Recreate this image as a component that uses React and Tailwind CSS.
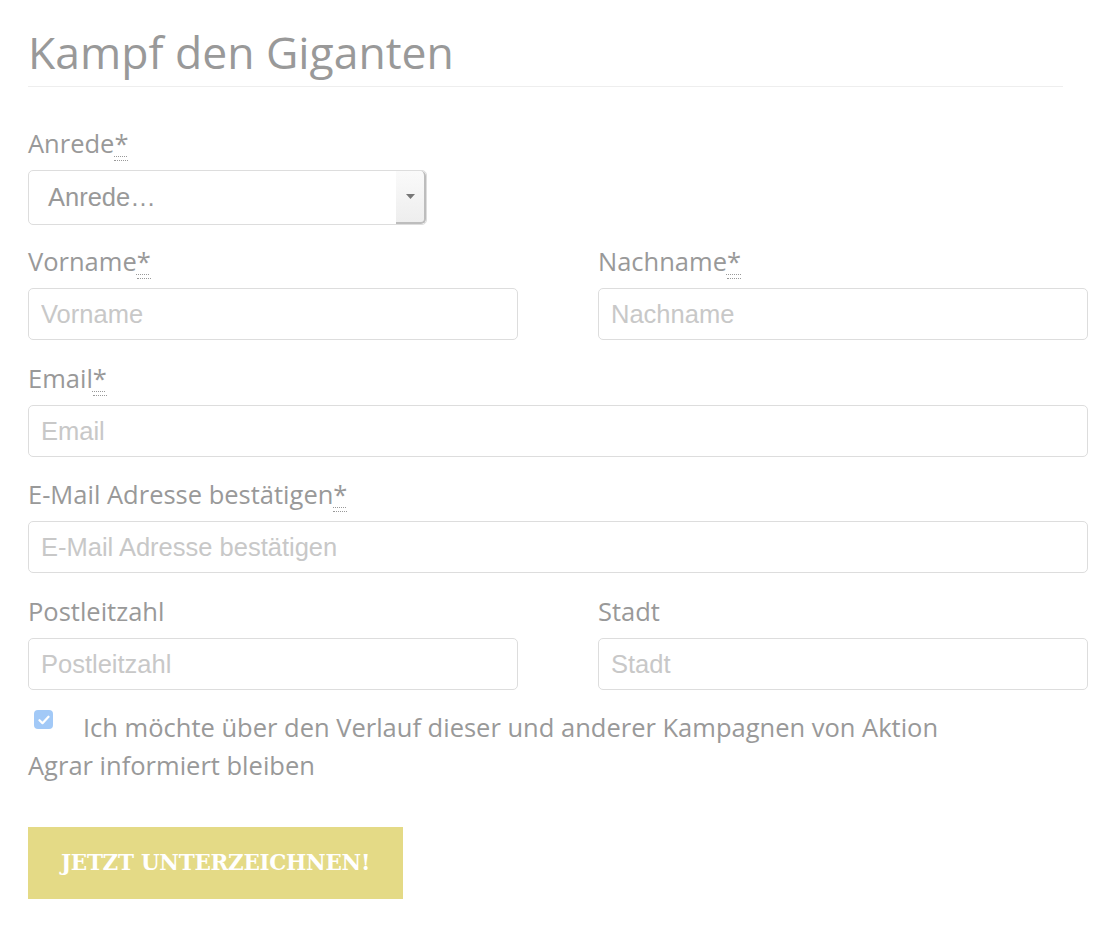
import React from "react";

const labelCls = "block text-[25.5px] leading-[30px] text-[#999] mb-[12px] [font-family:'Open_Sans',sans-serif]";
const inputCls = "block w-full h-[52px] rounded-[5px] border border-[#ddd] bg-white px-[12px] text-[25.5px] text-[#555] placeholder:text-[#c8c8c8] outline-none [font-family:'Liberation_Sans',Arial,sans-serif]";

function Req() {
  return (
    <span className="border-b border-dotted border-[#999] underline decoration-dotted decoration-1 underline-offset-[3px]">*</span>
  );
}

function Field({ label, req, placeholder }) {
  return (
    <div>
      <label className={labelCls}>
        {label}
        {req && <Req />}
      </label>
      <input className={inputCls} placeholder={placeholder} />
    </div>
  );
}

export default function App() {
  return (
    <div className="bg-white min-h-[936px] w-[1118px] pl-[28px] pt-[24px] [font-family:'Open_Sans',sans-serif]">
      <div className="w-[1060px]">
        <h1 className="text-[44.5px] leading-[56px] text-[#999] font-normal pb-[6px] border-b border-[#eee] w-[1035px] [font-family:'Open_Sans',sans-serif]">
          Kampf den Giganten
        </h1>

        <div className="mt-[41px]">
          <label className={labelCls}>
            Anrede<Req />
          </label>
          <div className="relative w-[399px] h-[55px] rounded-[5px] border border-[#ddd] bg-white flex items-center">
            <span className="pl-[19px] text-[25.5px] text-[#999] [font-family:'Liberation_Sans',Arial,sans-serif]">Anrede…</span>
            <div className="absolute right-0 top-0 bottom-0 w-[30px] rounded-r-[5px] bg-gradient-to-b from-[#fafafa] to-[#eeeeee] border-r-2 border-b-2 border-[#bdbdbd] flex items-center justify-center">
              <svg width="9" height="5" viewBox="0 0 9 5"><path d="M0 0h9L4.5 5z" fill="#777" /></svg>
            </div>
          </div>
        </div>

        <div className="mt-[21px] grid grid-cols-2 gap-x-[80px]">
          <Field label="Vorname" req placeholder="Vorname" />
          <Field label="Nachname" req placeholder="Nachname" />
        </div>

        <div className="mt-[23px]">
          <Field label="Email" req placeholder="Email" />
        </div>

        <div className="mt-[22px]">
          <Field label="E-Mail Adresse bestätigen" req placeholder="E-Mail Adresse bestätigen" />
        </div>

        <div className="mt-[23px] grid grid-cols-2 gap-x-[80px]">
          <Field label="Postleitzahl" placeholder="Postleitzahl" />
          <Field label="Stadt" placeholder="Stadt" />
        </div>

        <div className="mt-[18px] w-[960px] text-[25.5px] leading-[38px] text-[#999]">
          <span className="inline-flex align-top mt-[2px] ml-[6px] mr-[30px] w-[19px] h-[19px] rounded-[4px] bg-[#a2c9f7] items-center justify-center">
            <svg width="12" height="10" viewBox="0 0 12 10"><path d="M1.5 5.2l3 3 6-6.5" stroke="#fff" strokeWidth="2.2" fill="none" strokeLinecap="round" strokeLinejoin="round" /></svg>
          </span>
          Ich möchte über den Verlauf dieser und anderer Kampagnen von Aktion Agrar informiert bleiben
        </div>

        <button className="mt-[43px] w-[375px] h-[72px] bg-[#e4da86] text-white text-[21.5px] font-bold uppercase tracking-[-0.3px] [font-family:'DejaVu_Serif',serif]">
          Jetzt unterzeichnen!
        </button>
      </div>
    </div>
  );
}
